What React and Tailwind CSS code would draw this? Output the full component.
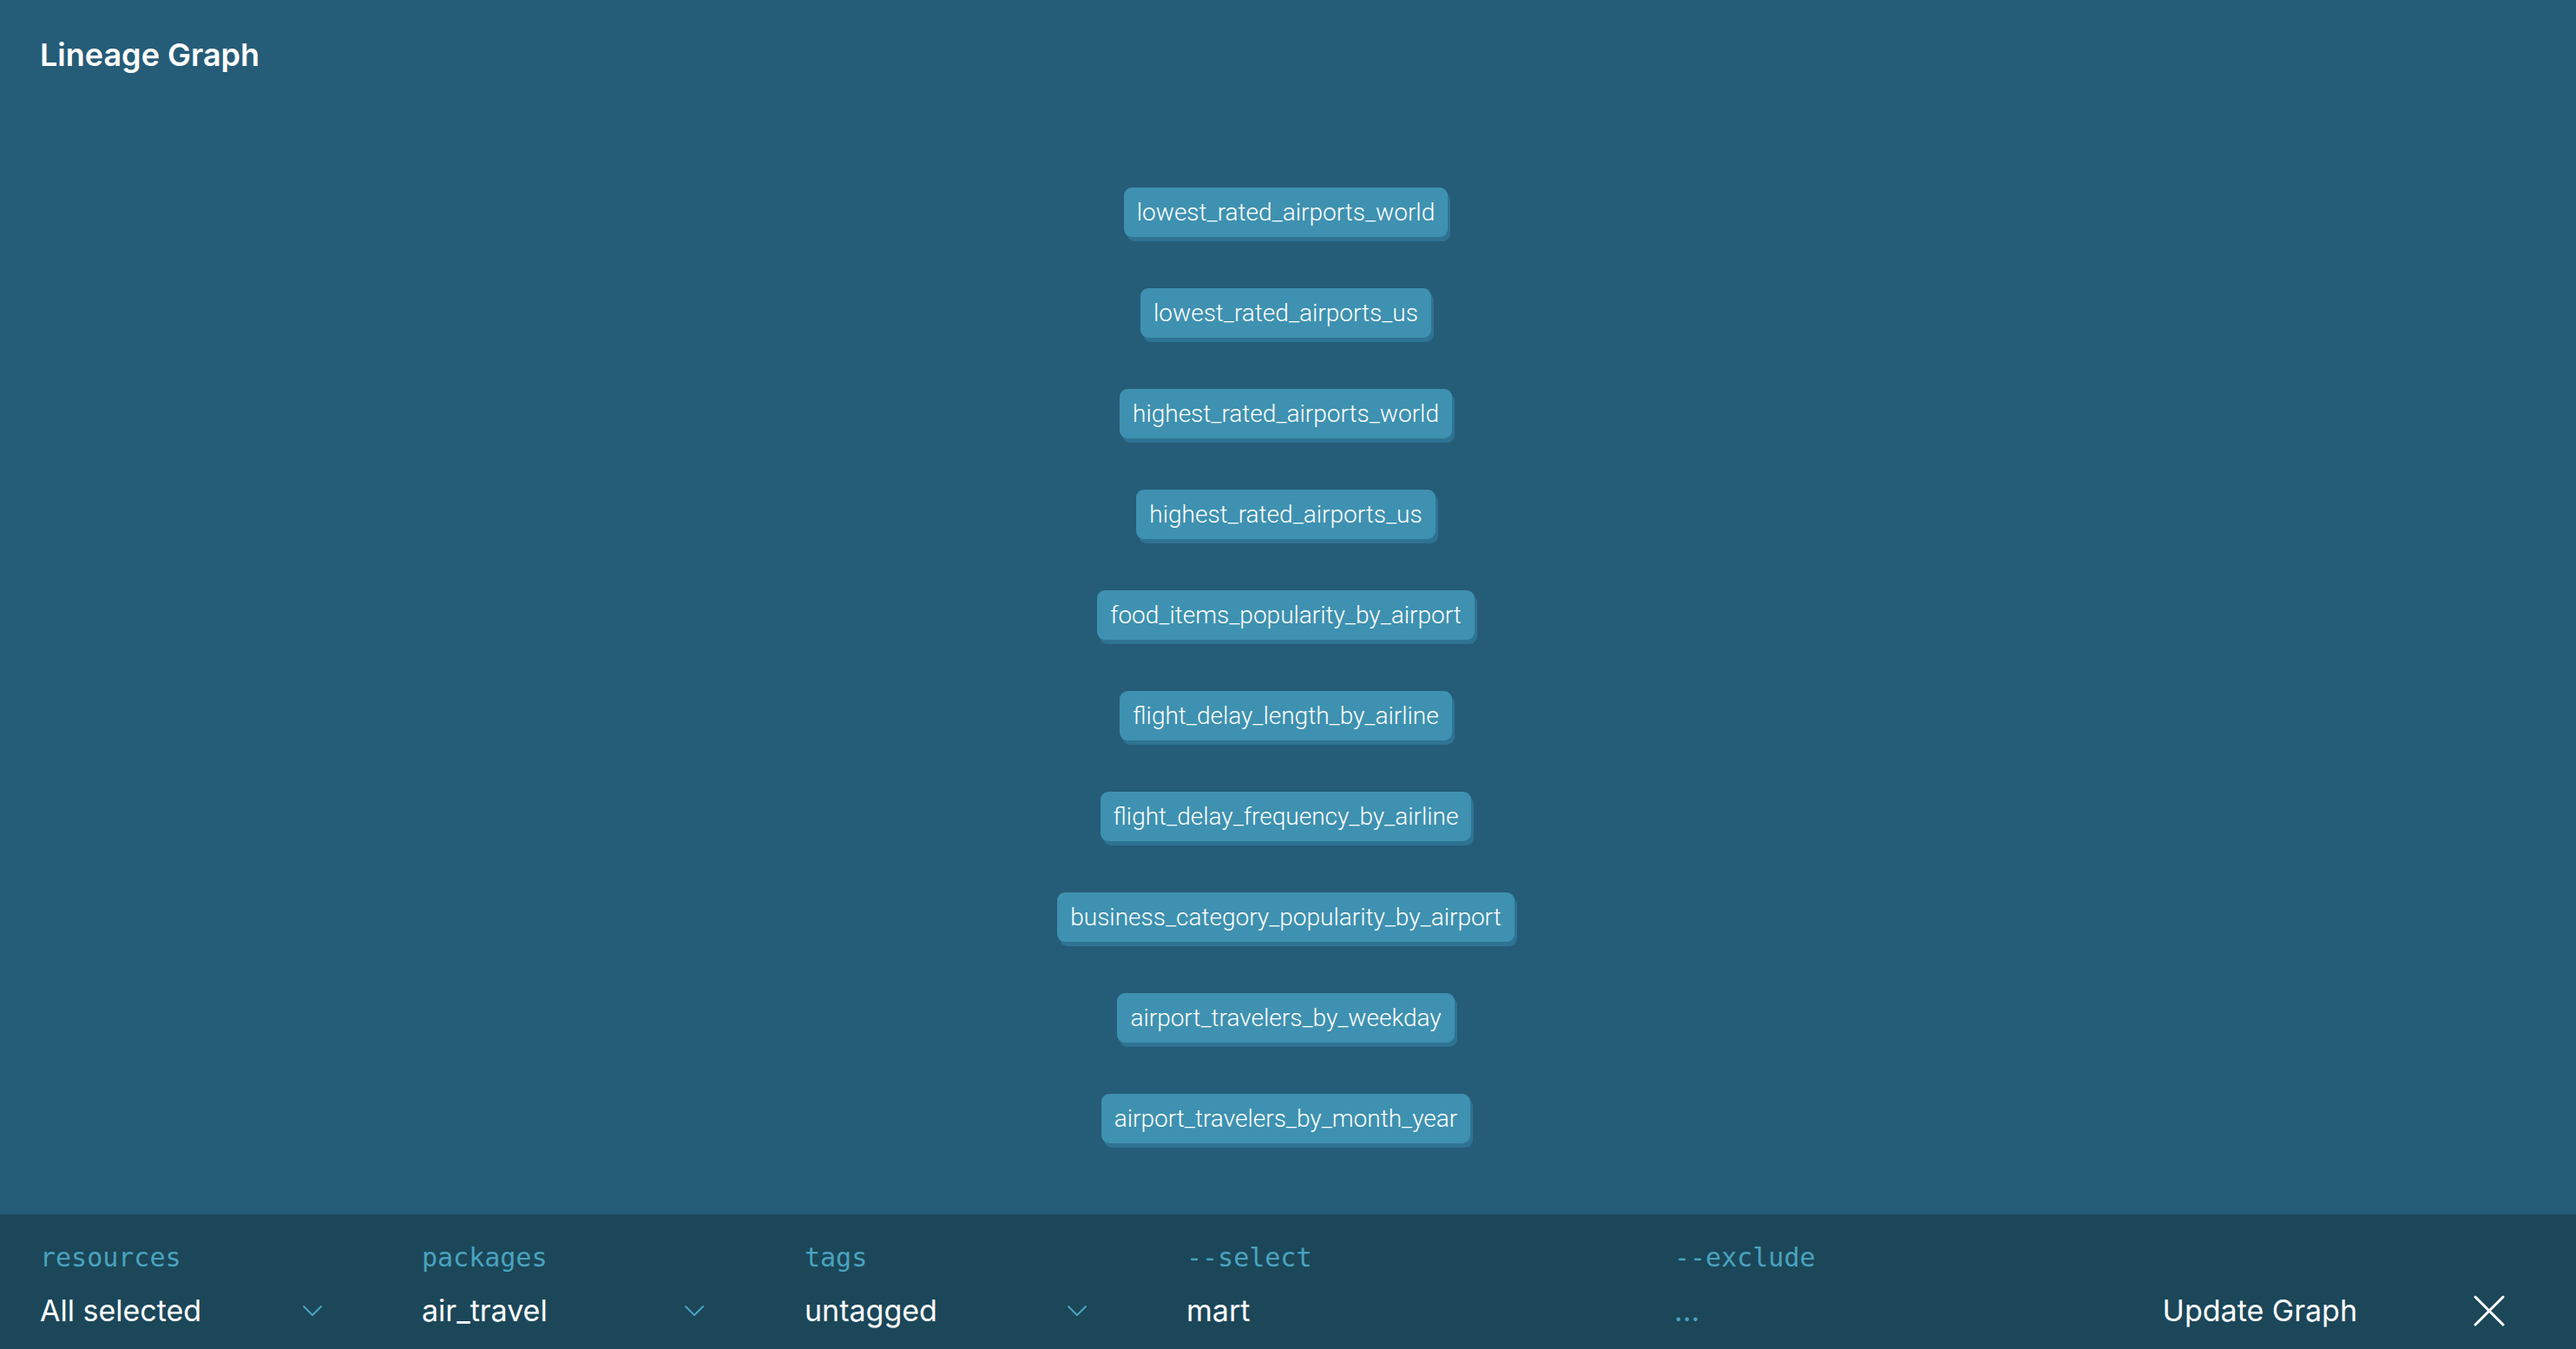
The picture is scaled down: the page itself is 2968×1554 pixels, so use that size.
import React from "react";

const models = [
  "lowest_rated_airports_world",
  "lowest_rated_airports_us",
  "highest_rated_airports_world",
  "highest_rated_airports_us",
  "food_items_popularity_by_airport",
  "flight_delay_length_by_airline",
  "flight_delay_frequency_by_airline",
  "business_category_popularity_by_airport",
  "airport_travelers_by_weekday",
  "airport_travelers_by_month_year",
];

function Chevron() {
  return (
    <svg width="24" height="14" viewBox="0 0 24 14" fill="none" className="text-[#4aa3be]">
      <path d="M2 2l10 10L22 2" stroke="currentColor" strokeWidth="2" strokeLinecap="round" strokeLinejoin="round" />
    </svg>
  );
}

function Field({ label, width, children }) {
  return (
    <div className={`flex flex-col gap-[23px] shrink-0 ${width}`}>
      <div className="text-[30px] leading-[34px] text-[#4aa3be] font-['DejaVu_Sans_Mono',monospace]">{label}</div>
      {children}
    </div>
  );
}

function SelectValue({ value }) {
  return (
    <div className="flex items-center justify-between w-[326px] h-[42px]">
      <span className="text-[34px] leading-[42px] text-white">{value}</span>
      <Chevron />
    </div>
  );
}

export default function App() {
  return (
    <div className="w-full h-[1554px] flex flex-col bg-[#255c77] font-['Inter',sans-serif] overflow-hidden">
      {/* Header */}
      <div className="pt-[42px] pl-[46px]">
        <h1 className="text-[36px] leading-[43px] font-semibold text-white">Lineage Graph</h1>
      </div>

      {/* Graph */}
      <div className="flex-1 flex flex-col items-center gap-[59px] pt-[131px] pr-[5px]">
        {models.map((m) => (
          <div
            key={m}
            className="h-[57px] flex items-center px-[15px] rounded-[9px] bg-[#3e91b0] shadow-[3px_5px_0_#2f7394] text-white text-[28px] font-light font-['Roboto',sans-serif]"
          >
            {m}
          </div>
        ))}
      </div>

      {/* Controls */}
      <div className="h-[155px] shrink-0 bg-[#1b4759] flex items-start pt-[33px] pl-[46px] pr-[82px]">
        <Field label="resources" width="w-[440px]">
          <SelectValue value="All selected" />
        </Field>
        <Field label="packages" width="w-[441px]">
          <SelectValue value="air_travel" />
        </Field>
        <Field label="tags" width="w-[440px]">
          <SelectValue value="untagged" />
        </Field>
        <Field label="--select" width="w-[562px]">
          <div className="text-[34px] leading-[42px] text-white">mart</div>
        </Field>
        <Field label="--exclude" width="flex-1">
          <div className="text-[34px] leading-[42px] text-[#4aa3be]">...</div>
        </Field>
        <div className="flex items-center gap-[134px] mt-[57px]">
          <button className="text-[34px] leading-[42px] text-white">Update Graph</button>
          <svg width="36" height="36" viewBox="0 0 36 36" fill="none">
            <path d="M2 2l32 32M34 2L2 34" stroke="white" strokeWidth="3" strokeLinecap="round" />
          </svg>
        </div>
      </div>
    </div>
  );
}
